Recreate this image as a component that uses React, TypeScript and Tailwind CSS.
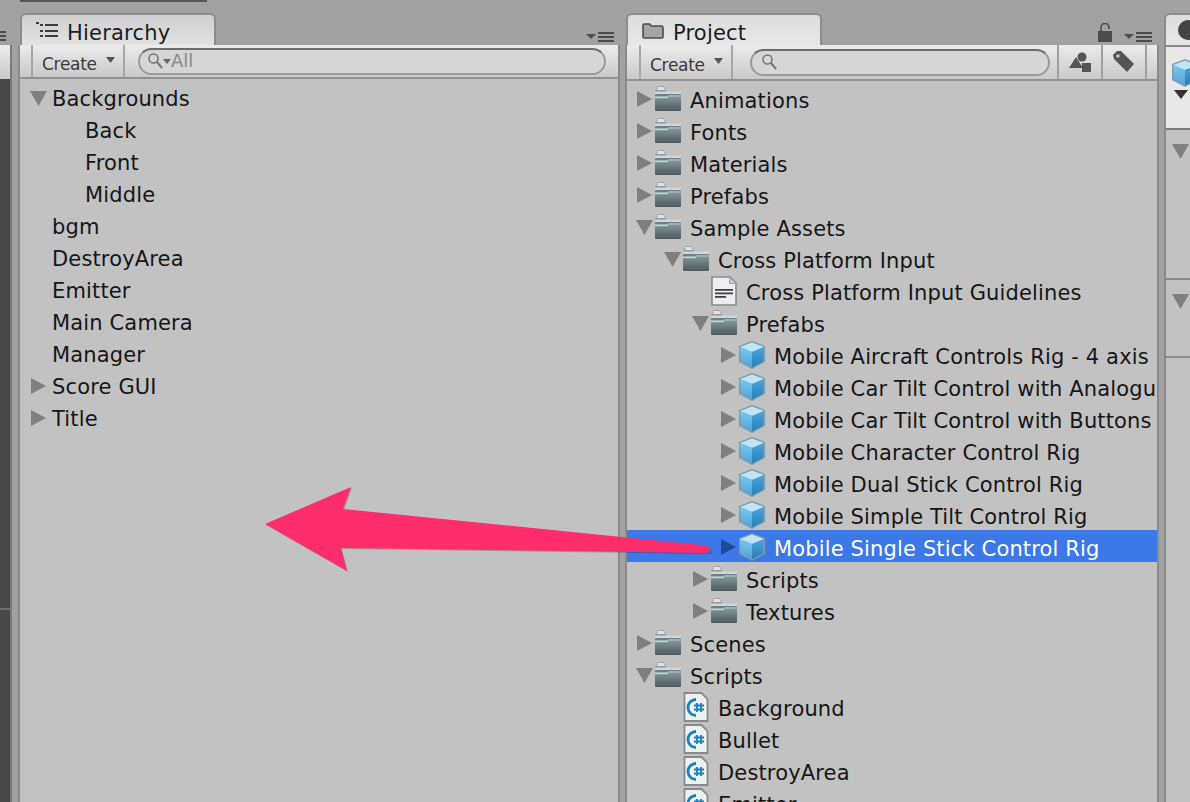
import type { ReactNode } from 'react';

type Arrow = 'down' | 'right' | null;
type IconKind = 'folder' | 'doc' | 'cube' | 'cs' | null;

interface TreeRow {
  label: string;
  level: number;
  arrow: Arrow;
  icon: IconKind;
  selected?: boolean;
}

const hierarchyRows: { label: string; level: number; arrow: Arrow }[] = [
  { label: 'Backgrounds', level: 0, arrow: 'down' },
  { label: 'Back', level: 1, arrow: null },
  { label: 'Front', level: 1, arrow: null },
  { label: 'Middle', level: 1, arrow: null },
  { label: 'bgm', level: 0, arrow: null },
  { label: 'DestroyArea', level: 0, arrow: null },
  { label: 'Emitter', level: 0, arrow: null },
  { label: 'Main Camera', level: 0, arrow: null },
  { label: 'Manager', level: 0, arrow: null },
  { label: 'Score GUI', level: 0, arrow: 'right' },
  { label: 'Title', level: 0, arrow: 'right' },
];

const projectRows: TreeRow[] = [
  { label: 'Animations', level: 0, arrow: 'right', icon: 'folder' },
  { label: 'Fonts', level: 0, arrow: 'right', icon: 'folder' },
  { label: 'Materials', level: 0, arrow: 'right', icon: 'folder' },
  { label: 'Prefabs', level: 0, arrow: 'right', icon: 'folder' },
  { label: 'Sample Assets', level: 0, arrow: 'down', icon: 'folder' },
  { label: 'Cross Platform Input', level: 1, arrow: 'down', icon: 'folder' },
  { label: 'Cross Platform Input Guidelines', level: 2, arrow: null, icon: 'doc' },
  { label: 'Prefabs', level: 2, arrow: 'down', icon: 'folder' },
  { label: 'Mobile Aircraft Controls Rig - 4 axis', level: 3, arrow: 'right', icon: 'cube' },
  { label: 'Mobile Car Tilt Control with Analogue', level: 3, arrow: 'right', icon: 'cube' },
  { label: 'Mobile Car Tilt Control with Buttons', level: 3, arrow: 'right', icon: 'cube' },
  { label: 'Mobile Character Control Rig', level: 3, arrow: 'right', icon: 'cube' },
  { label: 'Mobile Dual Stick Control Rig', level: 3, arrow: 'right', icon: 'cube' },
  { label: 'Mobile Simple Tilt Control Rig', level: 3, arrow: 'right', icon: 'cube' },
  { label: 'Mobile Single Stick Control Rig', level: 3, arrow: 'right', icon: 'cube', selected: true },
  { label: 'Scripts', level: 2, arrow: 'right', icon: 'folder' },
  { label: 'Textures', level: 2, arrow: 'right', icon: 'folder' },
  { label: 'Scenes', level: 0, arrow: 'right', icon: 'folder' },
  { label: 'Scripts', level: 0, arrow: 'down', icon: 'folder' },
  { label: 'Background', level: 1, arrow: null, icon: 'cs' },
  { label: 'Bullet', level: 1, arrow: null, icon: 'cs' },
  { label: 'DestroyArea', level: 1, arrow: null, icon: 'cs' },
  { label: 'Emitter', level: 1, arrow: null, icon: 'cs' },
];

function Triangle({ dir, color = '#7f7f7f' }: { dir: 'down' | 'right'; color?: string }) {
  return (
    <svg width="18" height="18" viewBox="0 0 18 18" className="shrink-0">
      {dir === 'down' ? (
        <polygon points="0,2 17,2 8.5,17" fill={color} />
      ) : (
        <polygon points="1,1 16,9 1,17" fill={color} />
      )}
    </svg>
  );
}

function FolderIcon() {
  return (
    <svg width="30" height="26" viewBox="0 0 30 26" className="shrink-0">
      <defs>
        <linearGradient id="folderBody" x1="0" y1="0" x2="0" y2="1">
          <stop offset="0" stopColor="#7d959b" />
          <stop offset="1" stopColor="#50585a" />
        </linearGradient>
      </defs>
      <path d="M2 5.5a2 2 0 0 1 2-2h7l2 2.5h13a2 2 0 0 1 2 2V23a2 2 0 0 1-2 2H4a2 2 0 0 1-2-2Z" fill="#8a9698" />
      <path d="M4 1.5a1.5 1.5 0 0 1 1.5-1h5l2.5 4H3.5Z" fill="#e2e5e5" stroke="#8f9394" strokeWidth="0.8" />
      <rect x="2" y="5.5" width="26" height="2.5" fill="#cfd9db" />
      <rect x="2" y="8" width="26" height="3" fill="#6e8388" />
      <rect x="2" y="11" width="26" height="14" rx="1.5" fill="url(#folderBody)" />
      <rect x="2" y="10.5" width="13" height="1.6" fill="#cdd7d9" />
      <rect x="15" y="9.5" width="13" height="1" fill="#cdd7d9" />
    </svg>
  );
}

function CubeIcon() {
  return (
    <svg width="28" height="30" viewBox="0 0 28 30" className="shrink-0">
      <defs>
        <linearGradient id="cubeLeft" x1="0" y1="0" x2="0" y2="1">
          <stop offset="0" stopColor="#7cc8ee" />
          <stop offset="1" stopColor="#4ea4da" />
        </linearGradient>
        <linearGradient id="cubeRight" x1="0" y1="0" x2="0" y2="1">
          <stop offset="0" stopColor="#4aa6de" />
          <stop offset="1" stopColor="#2a7fb8" />
        </linearGradient>
      </defs>
      <polygon points="14,1 27,6 27,22 14,29 1,22 1,6" fill="#8298a6" />
      <polygon points="14,2.5 26,7 14,12 2,7" fill="#bfe6f8" />
      <polygon points="2,7 14,12 14,27.5 3,21.5" fill="url(#cubeLeft)" />
      <polygon points="26,7 14,12 14,27.5 25,21.5" fill="url(#cubeRight)" />
    </svg>
  );
}

function DocIcon() {
  return (
    <svg width="28" height="30" viewBox="0 0 28 30" className="shrink-0">
      <path d="M2 1h18l6 6v22H2Z" fill="#eceeef" stroke="#8a8a8a" strokeWidth="1.6" />
      <path d="M19.5 1.5v6h6" fill="#c9cbcc" stroke="#a2a2a2" strokeWidth="1" />
      <g fill="#3f4346">
        <rect x="5" y="13" width="18" height="1.8" />
        <rect x="5" y="16.5" width="18" height="1.8" />
        <rect x="5" y="20" width="11" height="1.8" />
      </g>
    </svg>
  );
}

function CsIcon() {
  return (
    <svg width="26" height="30" viewBox="0 0 26 30" className="shrink-0">
      <path d="M1.5 1h17l6 6v22h-23Z" fill="#eef1f2" stroke="#8a8a8a" strokeWidth="1.8" />
      <path d="M13 7.5a8 8 0 0 0 0 16" fill="none" stroke="#1b80b8" strokeWidth="2.8" />
      <g stroke="#1b80b8" strokeWidth="1.8">
        <path d="M14 11v9M18 11v9M11 13.5h10M11 17.5h10" />
      </g>
    </svg>
  );
}

function MenuGlyph() {
  return (
    <svg width="28" height="10" viewBox="0 0 28 10">
      <polygon points="0,2 10,2 5,7" fill="#4c4c4c" />
      <g fill="#4c4c4c">
        <rect x="12" y="0" width="16" height="2" />
        <rect x="12" y="4" width="16" height="2" />
        <rect x="12" y="8" width="16" height="2" />
      </g>
    </svg>
  );
}

function SearchPill({ className, children }: { className: string; children?: ReactNode }) {
  return (
    <div
      className={`${className} flex h-[27px] items-center rounded-full border-2 border-[#9a9a9a] border-t-[#6c6c6c] bg-[#d6d6d6]`}
    >
      {children}
    </div>
  );
}

function Magnifier() {
  return (
    <svg width="16" height="18" viewBox="0 0 16 18" className="shrink-0">
      <circle cx="6.5" cy="6.5" r="4.5" fill="none" stroke="#777" strokeWidth="1.6" />
      <path d="M10 10l5 6" stroke="#777" strokeWidth="2" />
    </svg>
  );
}

function CreateButton() {
  return (
    <div className="flex w-[94px] items-center border-x-2 border-[#a6a6a6] pl-[9px]">
      <span className="mt-[8px] text-[17px] tracking-[-0.3px] text-[#3a3a3a]">Create</span>
      <svg width="9" height="6" viewBox="0 0 9 6" className="mb-[2px] ml-[9px]">
        <polygon points="0,0 9,0 4.5,6" fill="#555" />
      </svg>
    </div>
  );
}

function HierarchyPanel() {
  return (
    <div className="flex w-[602px] shrink-0 flex-col">
      <div className="ml-[2px] h-[2px] w-[187px] bg-[#555]" />
      <div className="flex h-[43px] items-end justify-between pl-[2px] pr-[6px]">
        <div className="flex h-[32px] w-[196px] items-center rounded-t-[6px] border-2 border-b-0 border-[#8c8c8c] bg-gradient-to-b from-[#cfcfcf] to-[#e2e2e2] pl-[14px]">
          <svg width="24" height="16" viewBox="0 0 24 16" className="shrink-0">
            <g fill="#3c3c3c">
              <rect x="0" y="0" width="3" height="2" />
              <rect x="4" y="2" width="3" height="2" />
              <rect x="9" y="2" width="13" height="2" />
              <rect x="4" y="8" width="3" height="2" />
              <rect x="9" y="8" width="13" height="2" />
              <rect x="4" y="13" width="3" height="2" />
              <rect x="9" y="13" width="13" height="2" />
            </g>
          </svg>
          <span className="ml-[7px] mt-[8px] text-[21px] tracking-[0.2px] text-[#1c1c1c]">Hierarchy</span>
        </div>
        <div className="mb-[3px]">
          <MenuGlyph />
        </div>
      </div>
      <div className="flex flex-1 flex-col border-x-2 border-[#8a8a8a] bg-[#c2c2c2]">
        <div className="flex h-[34px] border-b-2 border-[#929292] bg-gradient-to-b from-[#ececec] to-[#c9c9c9] pl-[11px]">
          <CreateButton />
          <div className="ml-[13px] flex items-center">
            <SearchPill className="w-[468px] pl-[7px]">
              <Magnifier />
              <svg width="8" height="5" viewBox="0 0 8 5">
                <polygon points="0,0 8,0 4,5" fill="#666" />
              </svg>
              <span className="text-[18px] leading-none text-[#8a8a8a]">All</span>
            </SearchPill>
          </div>
        </div>
        <div className="mt-[3px]">
          {hierarchyRows.map((row) => (
            <div
              key={row.label}
              className="flex h-[32px] items-center whitespace-nowrap"
              style={{ paddingLeft: row.level === 1 ? 65 : 10 }}
            >
              {row.level === 0 && (
                <span className="flex w-[22px] shrink-0">{row.arrow && <Triangle dir={row.arrow} />}</span>
              )}
              <span className="mt-[4px] text-[21px] tracking-[0.15px] text-[#161616]">{row.label}</span>
            </div>
          ))}
        </div>
      </div>
    </div>
  );
}

function ProjectPanel() {
  return (
    <div className="ml-[5px] flex w-[534px] shrink-0 flex-col">
      <div className="flex h-[45px] items-end justify-between pl-[1px] pr-[7px]">
        <div className="flex h-[32px] w-[196px] items-center rounded-t-[6px] border-2 border-b-0 border-[#8c8c8c] bg-gradient-to-b from-[#dcdcdc] to-[#e8e8e8] pl-[14px]">
          <svg width="22" height="17" viewBox="0 0 22 17" className="shrink-0">
            <path d="M1 3.5a1.5 1.5 0 0 1 1.5-1.5h5l2 2h10a1.5 1.5 0 0 1 1.5 1.5V15a1 1 0 0 1-1 1H2a1 1 0 0 1-1-1Z" fill="#a5a5a5" stroke="#4c4c4c" strokeWidth="1.6" />
          </svg>
          <span className="ml-[9px] mt-[8px] text-[21px] tracking-[0.2px] text-[#1c1c1c]">Project</span>
        </div>
        <div className="flex items-end gap-[12px]">
          <svg width="14" height="19" viewBox="0 0 14 19" className="mb-[3px]">
            <path d="M3 9V4.5a4 4 0 0 1 8 0V6" fill="none" stroke="#4c4c4c" strokeWidth="1.6" />
            <rect x="0" y="8" width="14" height="11" fill="#4c4c4c" />
          </svg>
          <div className="mb-[3px]">
            <MenuGlyph />
          </div>
        </div>
      </div>
      <div className="flex min-h-0 flex-1 flex-col overflow-hidden border-x-2 border-[#8a8a8a] bg-[#c2c2c2]">
        <div className="flex h-[36px] shrink-0 border-b-2 border-[#929292] bg-gradient-to-b from-[#ececec] to-[#c9c9c9] pl-[12px]">
          <CreateButton />
          <div className="ml-[17px] flex items-center">
            <SearchPill className="w-[300px] pl-[9px]">
              <Magnifier />
            </SearchPill>
          </div>
          <div className="ml-[7px] flex w-[46px] items-center justify-center border-x-2 border-[#a0a0a0]">
            <svg width="22" height="22" viewBox="0 0 22 22">
              <circle cx="13" cy="6" r="4.5" fill="#555" />
              <polygon points="7,6 14,17 0,17" fill="#555" />
              <rect x="13" y="12" width="9" height="9" fill="#555" />
            </svg>
          </div>
          <div className="flex w-[44px] items-center justify-center border-r-2 border-[#a0a0a0]">
            <svg width="22" height="22" viewBox="0 0 22 22">
              <path d="M0 4l4-4h4l13 13-7 8L1 8Z" fill="#555" />
              <circle cx="5" cy="5" r="1.7" fill="#c9c9c9" />
            </svg>
          </div>
        </div>
        <div className="mt-[1px]">
          {projectRows.map((row, i) => (
            <div
              key={i}
              className={`flex h-[32px] items-center whitespace-nowrap pt-[2px] ${row.selected ? 'bg-[#3c78e8]' : ''}`}
              style={{ paddingLeft: 9 + row.level * 28 }}
            >
              <span className="flex w-[18px] shrink-0">
                {row.arrow && <Triangle dir={row.arrow} color={row.selected ? '#1f4a9c' : '#7f7f7f'} />}
              </span>
              <span className="flex w-[28px] shrink-0 items-center justify-center">
                {row.icon === 'folder' && <FolderIcon />}
                {row.icon === 'cube' && <CubeIcon />}
                {row.icon === 'doc' && <DocIcon />}
                {row.icon === 'cs' && <CsIcon />}
              </span>
              <span
                className={`ml-[8px] mt-[6px] text-[21px] tracking-[0.15px] ${row.selected ? 'text-white' : 'text-[#161616]'}`}
              >
                {row.label}
              </span>
            </div>
          ))}
        </div>
      </div>
    </div>
  );
}

function InspectorPanel() {
  return (
    <div className="ml-[5px] flex min-w-0 flex-1 flex-col">
      <div className="flex h-[45px] items-end">
        <div className="flex h-[32px] flex-1 items-center rounded-tl-[6px] border-2 border-b-0 border-r-0 border-[#8c8c8c] bg-gradient-to-b from-[#dcdcdc] to-[#e8e8e8] pl-[12px]">
          <div className="h-[20px] w-[20px] shrink-0 rounded-full bg-[#444]" />
        </div>
      </div>
      <div className="flex flex-1 flex-col border-l-2 border-[#8a8a8a] bg-[#c2c2c2]">
        <div className="relative h-[85px] border-b-2 border-t-2 border-b-[#7e7e7e] border-t-[#8a8a8a] bg-[#e8e8e8] pl-[5px] pt-[11px]">
          <CubeIcon />
          <svg width="14" height="9" viewBox="0 0 14 9" className="absolute left-[8px] top-[43px]">
            <polygon points="0,0 14,0 7,9" fill="#333" />
          </svg>
        </div>
        <div className="flex h-[150px] border-b-2 border-[#8a8a8a] pl-[6px] pt-[12px]">
          <Triangle dir="down" />
        </div>
        <div className="flex h-[78px] border-b-2 border-[#8a8a8a] pl-[6px] pt-[12px]">
          <Triangle dir="down" />
        </div>
      </div>
    </div>
  );
}

export default function App() {
  return (
    <div className="relative flex h-[802px] w-[1190px] overflow-hidden bg-[#a1a1a1] font-['DejaVu_Sans',sans-serif]">
      {/* Scene view sliver on the far left */}
      <div className="mr-[6px] flex w-[12px] shrink-0 flex-col">
        <div className="h-[45px] pt-[31px]">
          <div className="flex w-[6px] flex-col gap-[2px]">
            <div className="h-[2px] bg-[#4c4c4c]" />
            <div className="h-[2px] bg-[#4c4c4c]" />
            <div className="h-[2px] bg-[#4c4c4c]" />
          </div>
        </div>
        <div className="flex flex-1 flex-col border-r-2 border-[#7a7a7a]">
          <div className="h-[34px] bg-gradient-to-b from-[#ececec] to-[#c9c9c9]" />
          <div className="h-[531px] border-b-2 border-[#6e6e6e] bg-[#484848]" />
          <div className="flex-1 bg-[#484848]" />
        </div>
      </div>
      <HierarchyPanel />
      <ProjectPanel />
      <InspectorPanel />

      {/* Annotation arrow over the panels */}
      <svg width="1190" height="802" viewBox="0 0 1190 802" className="pointer-events-none absolute left-0 top-0">
        <polygon points="266,525 352,488 344,510 710,548 712,554 342,549 348,572" fill="#000" opacity="0.2" />
        <path
          d="M265 524 351 487 343 509 706 545.5Q711 547 710 550 709 553 705 553L341 548 347 571Z"
          fill="#ff2d6c"
        />
      </svg>
    </div>
  );
}
